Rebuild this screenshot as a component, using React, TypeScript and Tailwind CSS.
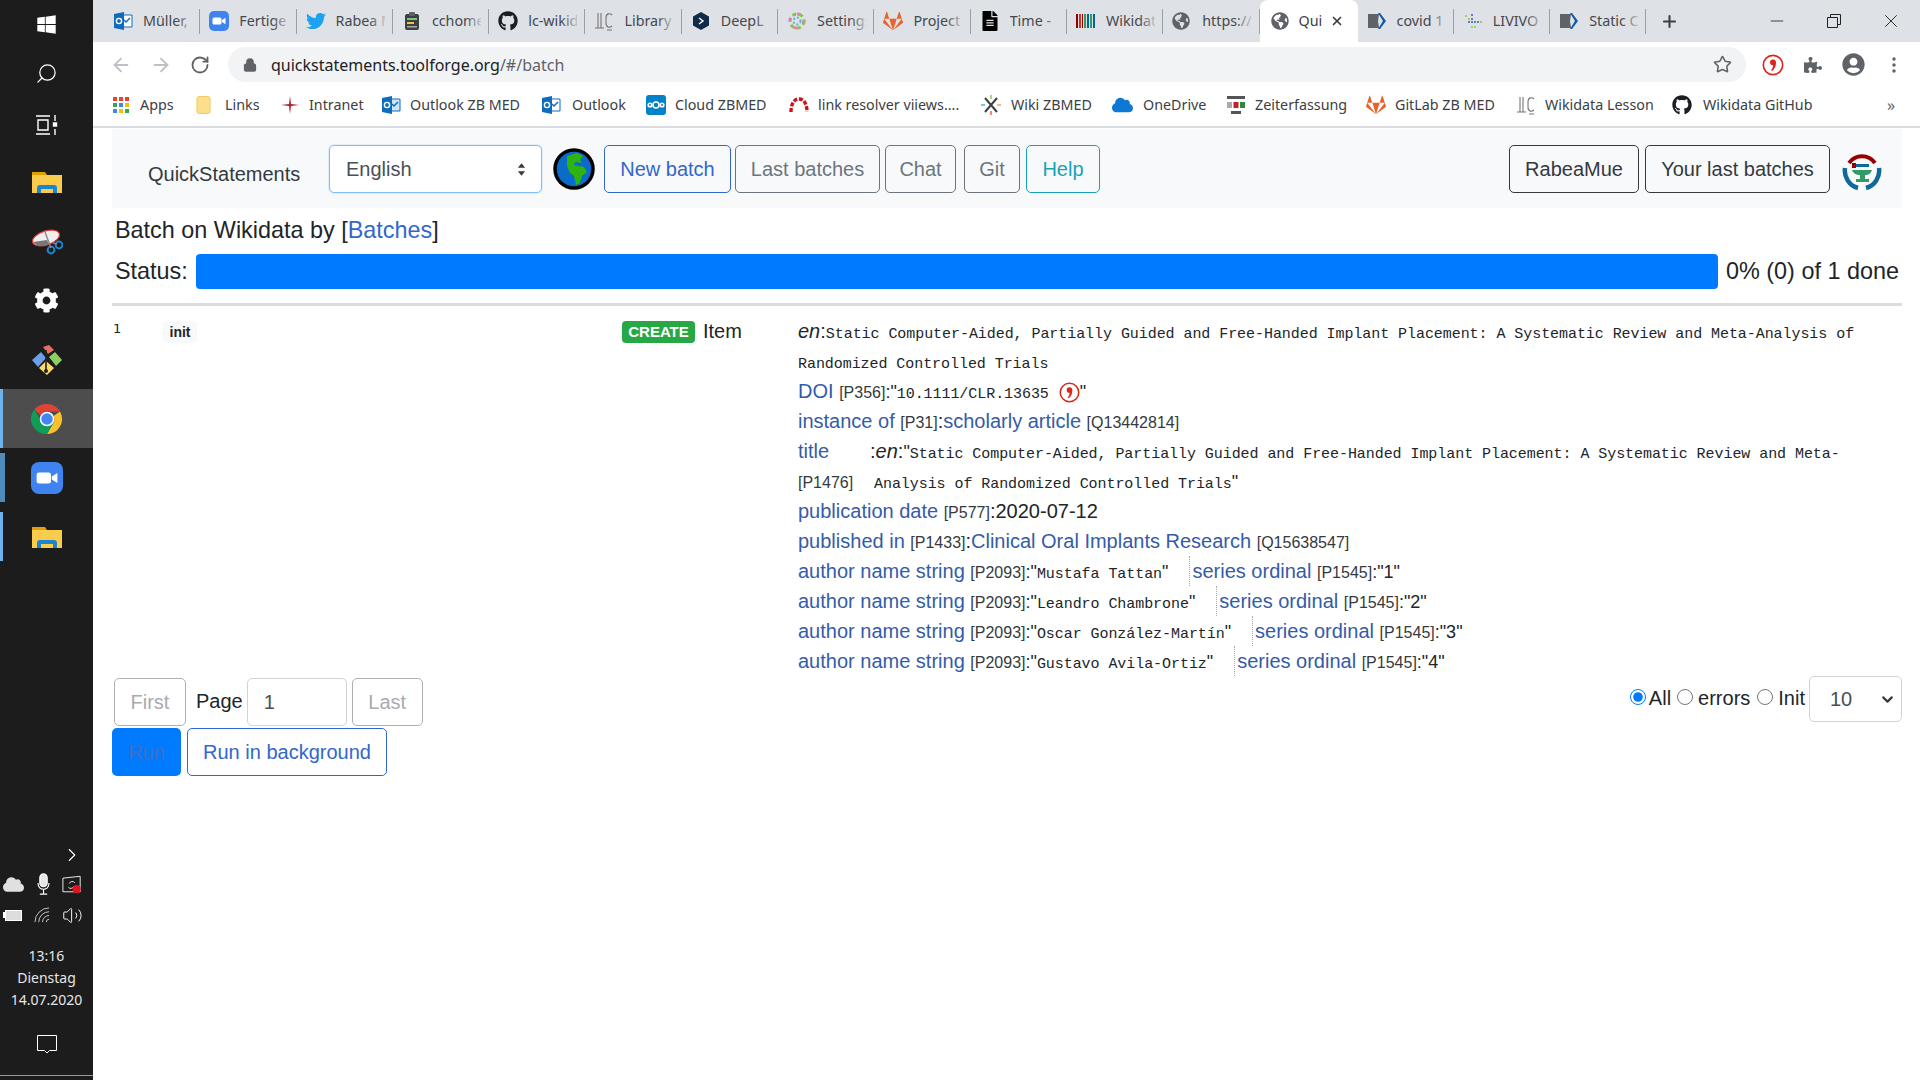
import { ArrowLeft, ArrowRight, RotateCw, Lock, Star, Plus, X, Minus, Search, ChevronRight, ChevronDown, Volume2 } from "lucide-react";
import { FaGithub, FaTwitter, FaGitlab, FaWindows, FaCog, FaPuzzlePiece, FaUserCircle, FaGlobeAmericas, FaFileAlt, FaCloud } from "react-icons/fa";

const ui = { fontFamily: '"Noto Sans", "Open Sans", sans-serif' };

function Outlook({ light = false }: { light?: boolean }) {
  return (
    <svg viewBox="0 0 20 20" className="h-5 w-5 shrink-0">
      <path d="M8 4h11v12H8z" fill={light ? "#cfe4f7" : "#fff"} stroke="#0f6cbd" strokeWidth="1" />
      <path d="M11 9l2 2 4-4" fill="none" stroke="#0f6cbd" strokeWidth="1.5" />
      <path d="M1 3l10-2v18L1 17z" fill="#0f6cbd" />
      <circle cx="6" cy="10" r="2.6" fill="none" stroke="#fff" strokeWidth="1.4" />
    </svg>
  );
}

function ZoomIcon({ size = "h-5 w-5" }: { size?: string }) {
  return (
    <svg viewBox="0 0 20 20" className={`${size} shrink-0`}>
      <rect width="20" height="20" rx="5" fill="#3f83f0" />
      <rect x="3.5" y="6.5" width="9" height="7" rx="1.5" fill="#fff" />
      <path d="M13 9l3.5-2.2v6.4L13 11z" fill="#fff" />
    </svg>
  );
}

function Clipboard() {
  return (
    <svg viewBox="0 0 20 20" className="h-5 w-5 shrink-0">
      <rect x="3" y="3" width="14" height="16" rx="2" fill="#3c4043" />
      <rect x="7" y="1" width="6" height="4" rx="1" fill="#5f6368" />
      <rect x="5" y="7" width="10" height="2" fill="#7cc47f" />
      <rect x="5" y="11" width="7" height="2" fill="#f0c040" />
      <rect x="5" y="15" width="10" height="1.5" fill="#aaa" />
    </svg>
  );
}

function LcIcon() {
  return (
    <svg viewBox="0 0 20 20" className="h-5 w-5 shrink-0" fill="none" stroke="#777" strokeWidth="1.1">
      <path d="M1 17h9M4 2v15M7 2v15M18 4c-2-2-6-2-6 3v5c0 5 4 5 6 3M13 19h5" />
    </svg>
  );
}

function DeepL() {
  return (
    <svg viewBox="0 0 20 20" className="h-5 w-5 shrink-0">
      <path d="M10 1l8 4.5v9L10 19l-8-4.5v-9z" fill="#0f2b46" />
      <path d="M8 7l4 3-4 3" fill="none" stroke="#fff" strokeWidth="1.4" />
    </svg>
  );
}

function SettingSwirl() {
  return (
    <svg viewBox="0 0 20 20" className="h-5 w-5 shrink-0" fill="none" strokeWidth="3">
      <circle cx="10" cy="10" r="7" stroke="#8bc34a" strokeDasharray="4 3" />
      <circle cx="10" cy="10" r="7" stroke="#e57fb0" strokeDasharray="3 8" />
      <circle cx="10" cy="10" r="3.5" stroke="#55b8c9" strokeDasharray="2 2" strokeWidth="2" />
    </svg>
  );
}

function WikidataBars() {
  return (
    <svg viewBox="0 0 20 20" className="h-5 w-5 shrink-0">
      <rect x="0" y="3" width="2" height="14" fill="#990000" />
      <rect x="3" y="3" width="2" height="14" fill="#c33" />
      <rect x="6" y="3" width="1" height="14" fill="#990000" />
      <rect x="8" y="3" width="2" height="14" fill="#339966" />
      <rect x="11" y="3" width="2" height="14" fill="#006699" />
      <rect x="14" y="3" width="2" height="14" fill="#339966" />
      <rect x="17" y="3" width="2" height="14" fill="#006699" />
    </svg>
  );
}

function Chevrons() {
  return (
    <svg viewBox="0 0 20 20" className="h-5 w-5 shrink-0">
      <path d="M1 3h11l-1 7 1 7H1z" fill="#5f6368" />
      <path d="M13 2l6 8-6 8h-2l5-8-5-8z" fill="#0f5aa8" />
    </svg>
  );
}

function Livivo() {
  return (
    <svg viewBox="0 0 20 20" className="h-5 w-5 shrink-0">
      <g fill="#5b7fc9">
        <rect x="8" y="3" width="2" height="2" /><rect x="8" y="7" width="2" height="2" /><rect x="11" y="10" width="2" height="2" />
        <rect x="8" y="10" width="2" height="2" /><rect x="14" y="10" width="2" height="2" /><rect x="5" y="10" width="2" height="2" />
      </g>
      <g fill="#a5cf5e">
        <rect x="2" y="4" width="2" height="2" /><rect x="5" y="7" width="2" height="2" /><rect x="11" y="15" width="2" height="2" />
        <rect x="8" y="15" width="2" height="2" /><rect x="17" y="10" width="2" height="2" />
      </g>
    </svg>
  );
}

function CommaCircle({ className }: { className: string }) {
  return (
    <svg viewBox="0 0 20 20" className={className}>
      <circle cx="10" cy="10" r="8.8" fill="#fff" stroke="#d9281e" strokeWidth="1.5" />
      <circle cx="10" cy="7.6" r="2.7" fill="#d9281e" />
      <path d="M12.6 7.500c.3 3.500-1 6-3.400 8l-1-.8c1.500-1.700 1.900-3.200 1.900-5z" fill="#d9281e" />
    </svg>
  );
}

const tabs = [
  { label: "Müller,", icon: <Outlook /> },
  { label: "Fertige", icon: <ZoomIcon /> },
  { label: "Rabea M", icon: <FaTwitter className="h-5 w-5 shrink-0 text-[#1da1f2]" /> },
  { label: "cchome", icon: <Clipboard /> },
  { label: "lc-wikid", icon: <FaGithub className="h-5 w-5 shrink-0 text-[#1b1f23]" /> },
  { label: "Library", icon: <LcIcon /> },
  { label: "DeepL", icon: <DeepL /> },
  { label: "Settings", icon: <SettingSwirl /> },
  { label: "Project", icon: <FaGitlab className="h-5 w-5 shrink-0 text-[#e8622c]" /> },
  { label: "Time -", icon: <FaFileAlt className="h-5 w-5 shrink-0 text-black" /> },
  { label: "Wikidat", icon: <WikidataBars /> },
  { label: "https://", icon: <FaGlobeAmericas className="h-[18px] w-[18px] shrink-0 text-[#5f6368]" /> },
  { label: "Qui", icon: <FaGlobeAmericas className="h-[18px] w-[18px] shrink-0 text-[#5f6368]" />, active: true },
  { label: "covid 1", icon: <Chevrons /> },
  { label: "LIVIVO", icon: <Livivo /> },
  { label: "Static C", icon: <Chevrons /> },
];

const bookmarks = [
  {
    label: "Apps", w: "w-[83px]", gap: "gap-[11px]",
    icon: (
      <svg viewBox="0 0 16 16" className="h-4 w-4 shrink-0">
        <g fill="#ea4335"><rect width="4" height="4" /><rect x="6" width="4" height="4" /><rect x="12" width="4" height="4" /></g>
        <g fill="#34a853"><rect y="6" width="4" height="4" /><rect x="6" y="6" width="4" height="4" fill="#4285f4" /><rect x="12" y="6" width="4" height="4" fill="#fbbc04" /></g>
        <g fill="#4285f4"><rect y="12" width="4" height="4" /><rect x="6" y="12" width="4" height="4" fill="#fbbc04" /><rect x="12" y="12" width="4" height="4" fill="#34a853" /></g>
      </svg>
    ),
  },
  {
    label: "Links", w: "w-[84px]", gap: "gap-[14px]",
    icon: <svg viewBox="0 0 16 20" className="h-5 w-[15px] shrink-0"><rect x="1" y="1" width="14" height="18" rx="2" fill="#fcdf8a" stroke="#f2c85a" /></svg>,
  },
  {
    label: "Intranet", w: "w-[101px]", gap: "gap-[9px]",
    icon: <svg viewBox="0 0 20 20" className="h-5 w-5 shrink-0"><path d="M10 1l1 8 8 1-8 1-1 8-1-8-8-1 8-1z" fill="#a8262c" /></svg>,
  },
  { label: "Outlook ZB MED", w: "w-[160px]", gap: "gap-[9px]", icon: <Outlook light /> },
  { label: "Outlook", w: "w-[105px]", gap: "gap-[11px]", icon: <Outlook /> },
  {
    label: "Cloud ZBMED", w: "w-[143px]", gap: "gap-[9px]",
    icon: (
      <svg viewBox="0 0 20 20" className="h-5 w-5 shrink-0">
        <rect width="20" height="20" rx="3" fill="#0082c9" />
        <g fill="none" stroke="#fff" strokeWidth="1.6"><circle cx="10" cy="10" r="3" /><circle cx="4" cy="10" r="1.8" /><circle cx="16" cy="10" r="1.8" /></g>
      </svg>
    ),
  },
  {
    label: "link resolver viiews....", w: "w-[192px]", gap: "gap-[9px]",
    icon: <svg viewBox="0 0 20 20" className="h-5 w-5 shrink-0"><path d="M2 17c0-8 3-13 8-13s8 5 8 13" fill="none" stroke="#c9151b" strokeWidth="3.4" strokeDasharray="4 1.6" /></svg>,
  },
  {
    label: "Wiki ZBMED", w: "w-[131px]", gap: "gap-[10px]",
    icon: (
      <svg viewBox="0 0 20 20" className="h-5 w-5 shrink-0">
        <path d="M4 3l12 14M16 3L4 17" stroke="#3c4043" strokeWidth="2" />
        <path d="M10 0v4" stroke="#8bc34a" strokeWidth="1.4" /><path d="M10 16v4" stroke="#e06030" strokeWidth="1.4" />
        <path d="M0 10h4" stroke="#4aa8d8" strokeWidth="1.4" /><path d="M16 10h4" stroke="#f0a030" strokeWidth="1.4" />
      </svg>
    ),
  },
  { label: "OneDrive", w: "w-[114px]", gap: "gap-[10px]", icon: <FaCloud className="h-5 w-[21px] shrink-0 text-[#0f78d4]" /> },
  {
    label: "Zeiterfassung", w: "w-[140px]", gap: "gap-[9px]",
    icon: (
      <svg viewBox="0 0 20 20" className="h-5 w-5 shrink-0">
        <rect x="1" y="1" width="18" height="3" fill="#555" />
        <rect x="1" y="7" width="5" height="6" fill="#aaa" /><rect x="7.5" y="7" width="5" height="6" fill="#c8202a" /><rect x="14" y="7" width="5" height="6" fill="#2a8a44" />
        <rect x="5" y="16" width="10" height="3" fill="#555" />
      </svg>
    ),
  },
  { label: "GitLab ZB MED", w: "w-[150px]", gap: "gap-[9px]", icon: <FaGitlab className="h-5 w-5 shrink-0 text-[#e8622c]" /> },
  { label: "Wikidata Lesson", w: "w-[156px]", gap: "gap-[9px]", icon: <LcIcon /> },
  { label: "Wikidata GitHub", w: "w-[221px]", gap: "gap-[11px]", icon: <FaGithub className="h-5 w-5 shrink-0 text-[#1b1f23]" /> },
];

function TabStrip() {
  return (
    <div className="flex h-[42px] items-stretch bg-[#dee1e6] pl-[11px]">
      {tabs.map((t) =>
        t.active ? (
          <div key={t.label} className="relative flex w-[98px] items-center rounded-t-lg bg-white pl-[11px]">
            {t.icon}
            <span className="ml-[10px] text-[14.3px] whitespace-nowrap text-[#3c4043]">{t.label}</span>
            <X className="mr-[14px] ml-auto h-[14px] w-[14px] text-[#3c4043]" strokeWidth={3} />
          </div>
        ) : (
          <div key={t.label} className="relative flex w-[96.3px] items-center pl-[9px]">
            <div className="flex w-[28px] shrink-0 items-center">{t.icon}</div>
            <span className="ml-[2px] w-[49px] overflow-hidden text-[14.3px] whitespace-nowrap text-[#45484d]">{t.label}</span>
            <div className="absolute top-0 bottom-0 left-[72px] w-[20px] bg-gradient-to-r from-transparent to-[#dee1e6]" />
            <div className="absolute top-[9px] right-0 h-[25px] w-px bg-[#9aa0a6]" />
          </div>
        ),
      )}
      <div className="flex w-[46px] items-center justify-center">
        <Plus className="h-[19px] w-[19px] text-[#3c4043]" strokeWidth={2.6} />
      </div>
      <div className="ml-auto flex items-center">
        <div className="flex w-[57px] justify-center"><Minus className="h-5 w-5 text-[#222]" strokeWidth={1} /></div>
        <div className="flex w-[57px] justify-center">
          <svg viewBox="0 0 14 14" className="h-[14px] w-[14px]" fill="none" stroke="#222"><path d="M.5 3.5h10v10H.5zM3.5 3.5v-3h10v10h-3" /></svg>
        </div>
        <div className="flex w-[58px] justify-center"><X className="h-[22px] w-[22px] text-[#222]" strokeWidth={1} /></div>
      </div>
    </div>
  );
}

function AddressBar() {
  return (
    <div className="flex h-[42px] items-center bg-white pt-[3px]">
      <div className="flex w-[135px] shrink-0 items-center pl-[17px]">
        <ArrowLeft className="h-[22px] w-[22px] text-[#bdc1c6]" strokeWidth={2} />
        <ArrowRight className="ml-[18px] h-[22px] w-[22px] text-[#bdc1c6]" strokeWidth={2} />
        <RotateCw className="ml-[18px] h-5 w-5 text-[#5f6368]" strokeWidth={2.2} />
      </div>
      <div className="flex h-[35px] w-[1518px] shrink-0 items-center rounded-full bg-[#f1f3f4] pl-[15px]">
        <Lock className="h-[14px] w-[14px] text-[#5f6368]" strokeWidth={3} fill="#5f6368" />
        <span className="ml-[14px] text-[16px] text-[#202124]">
          quickstatements.toolforge.org<span className="text-[#5f6368]">/#/batch</span>
        </span>
        <Star className="mr-[14px] ml-auto h-[19px] w-[19px] text-[#5f6368]" strokeWidth={2} />
      </div>
      <div className="flex items-center pl-[16px]">
        <CommaCircle className="h-[22px] w-[22px]" />
        <FaPuzzlePiece className="ml-[20px] h-[18px] w-[18px] text-[#5f6368]" />
        <FaUserCircle className="ml-[20px] h-[23px] w-[23px] text-[#5f6368]" />
        <svg viewBox="0 0 4 16" className="ml-[27px] h-4 w-1 fill-[#5f6368]"><circle cx="2" cy="2" r="1.7" /><circle cx="2" cy="8" r="1.7" /><circle cx="2" cy="14" r="1.7" /></svg>
      </div>
    </div>
  );
}

function BookmarksBar() {
  return (
    <div className="flex h-[44px] items-center border-b-2 border-[#dadce0] bg-white pl-[20px] text-[14.3px] text-[#3c4043]">
      {bookmarks.map((b) => (
        <div key={b.label} className={`flex shrink-0 items-center whitespace-nowrap ${b.w} ${b.gap}`}>
          {b.icon}
          <span>{b.label}</span>
        </div>
      ))}
      <span className="ml-[-6px] text-[16px] text-[#5f6368]">»</span>
    </div>
  );
}

function FolderIcon() {
  return (
    <svg viewBox="0 0 32 24" className="h-6 w-8">
      <path d="M1 2h13l2 3H1z" fill="#e0a000" />
      <path d="M1 5h30v18H1z" fill="#f9cc4e" />
      <path d="M6 23v-5c0-2 1-3 3-3h14c2 0 3 1 3 3v5h-4v-4H10v4z" fill="#1b86cf" />
    </svg>
  );
}

function Taskbar() {
  return (
    <aside className="flex w-[93px] shrink-0 flex-col bg-[#1c1c1c] text-[#e6e6e6]" style={ui}>
      <div className="flex h-[49px] items-center justify-center"><FaWindows className="h-[21px] w-[21px] text-white" /></div>
      <div className="flex h-[49px] items-center justify-center"><Search className="h-[23px] w-[23px] -scale-x-100 text-white" strokeWidth={1.3} /></div>
      <div className="flex h-[54px] items-center justify-center">
        <svg viewBox="0 0 22 20" className="h-5 w-[22px]" fill="none" stroke="#fff" strokeWidth="1.4">
          <path d="M0 1h14M0 19h14M2 5h10v10H2zM19 0v6M19 14v6" />
          <rect x="17.5" y="8" width="3" height="3" fill="#fff" />
        </svg>
      </div>
      <div className="flex h-[59px] items-center justify-center"><FolderIcon /></div>
      <div className="flex h-[60px] items-center justify-center">
        <svg viewBox="0 0 32 28" className="h-7 w-8">
          <ellipse cx="15" cy="11" rx="14" ry="7" transform="rotate(-18 15 11)" fill="#eee" stroke="#d33" strokeWidth="1.2" />
          <path d="M2 15c4 5 12 5 16 2l-2-4z" fill="#777" />
          <circle cx="20" cy="23" r="3.4" fill="none" stroke="#1b86cf" strokeWidth="2" />
          <circle cx="28" cy="18" r="3.4" fill="none" stroke="#1b86cf" strokeWidth="2" />
          <path d="M14 5l6 16M22 16l4 1" stroke="#888" strokeWidth="1.4" />
        </svg>
      </div>
      <div className="flex h-[59px] items-center justify-center"><FaCog className="h-[25px] w-[25px] text-white" /></div>
      <div className="flex h-[59px] items-center justify-center">
        <svg viewBox="0 0 32 32" className="h-8 w-8">
          <path d="M12 3l6-2 5 5-6 4z" fill="#ea6b66" />
          <path d="M1 16l9-8 5 6-8 9z" fill="#6d9eeb" />
          <path d="M18 13l6-5 7 8-6 6z" fill="#8fce63" />
          <path d="M8 24l7-7 8 7-7 7z" fill="#ffd966" />
          <path d="M15 6v22M15 14l6 4" stroke="#222" strokeWidth="1.6" />
          <circle cx="15" cy="27" r="2" fill="#222" />
        </svg>
      </div>
      <div className="relative flex h-[59px] items-center justify-center bg-[#4d4d4d]">
        <div className="absolute top-0 bottom-0 left-0 w-[3px] bg-[#6cb2eb]" />
        <svg viewBox="0 0 32 32" className="h-8 w-8">
          <path d="M16 1a15 15 0 0113 7.5H16a7.5 7.5 0 00-6.5 3.7L3.5 6.5A15 15 0 0116 1z" fill="#db4437" />
          <path d="M29 8.500a15 15 0 01-13 22.500l6.500-11.200A7.500 7.500 0 0022.500 13z" fill="#fbc02d" />
          <path d="M16 31A15 15 0 013.500 6.500l6.500 11.300a7.500 7.500 0 006.500 3.700l6-1.700z" fill="#0f9d58" />
          <circle cx="16" cy="16" r="6.500" fill="#4285f4" stroke="#fff" strokeWidth="1.500" />
        </svg>
      </div>
      <div className="relative flex h-[59px] items-center justify-center">
        <div className="absolute top-[5px] bottom-[5px] left-0 w-[5px] bg-[#4f8cbc]" />
        <ZoomIcon size="h-8 w-8" />
      </div>
      <div className="relative flex h-[59px] items-center justify-center">
        <div className="absolute top-[5px] bottom-[5px] left-0 w-[3px] bg-[#6cb2eb]" />
        <FolderIcon />
      </div>

      <div className="mt-auto flex flex-col items-center">
        <ChevronRight className="ml-[50px] h-[22px] w-[22px] text-white" strokeWidth={1.2} />
        <div className="mt-[3px] flex h-[30px] w-full items-center justify-between pr-[11px] pl-[3px]">
          <FaCloud className="h-[19px] w-[21px] text-[#e0e0e0]" />
          <svg viewBox="0 0 14 24" className="h-[22px] w-[13px]" fill="none" stroke="#fff" strokeWidth="1.3">
            <rect x="3" y="1" width="8" height="14" rx="4" fill="#e6e6e6" />
            <path d="M1 11c0 9 12 9 12 0M7 18v5M3 23h8" />
          </svg>
          <svg viewBox="0 0 22 20" className="h-[19px] w-[20px]">
            <path d="M1 3l19-2v17H1z" fill="none" stroke="#e6e6e6" strokeWidth="1.1" />
            <path d="M8 9a3.500 3.500 0 016-1M13 12a3.500 3.500 0 01-6 1" fill="none" stroke="#e6e6e6" strokeWidth="1.1" />
            <circle cx="16" cy="15" r="4.500" fill="#e81123" />
          </svg>
        </div>
        <div className="mt-px flex h-[30px] w-full items-center justify-between pr-[10px] pl-[3px]">
          <div className="flex items-center">
            <span className="h-[6px] w-[2px] bg-white" />
            <div className="h-[11px] w-[17px] border border-white bg-[#ddd]" />
          </div>
          <svg viewBox="0 0 18 18" className="h-[17px] w-[17px]" fill="none" stroke="#ccc"><path d="M1 16A15 15 0 0116 1M5 16A11 11 0 0116 5M9 16a7 7 0 017-7M13 16a3 3 0 013-3" /></svg>
          <Volume2 className="h-[21px] w-[21px] text-white" strokeWidth={1.1} />
        </div>
        <div className="mt-[15px] text-center text-[14px] leading-[22px]">
          <div>13:16</div>
          <div>Dienstag</div>
          <div>14.07.2020</div>
        </div>
        <svg viewBox="0 0 20 20" className="mt-[23px] h-5 w-5" fill="none" stroke="#fff" strokeWidth="1"><path d="M.5 1.500h19v15h-7l-2.500 2.500-2.500-2.500h-7z" /></svg>
        <div className="mt-[21px] mb-[4px] h-px w-full bg-[#999]" />
      </div>
    </aside>
  );
}

function NavBtn({ children, tone, className = "" }: { children: React.ReactNode; tone: string; className?: string }) {
  return (
    <div className={`flex h-[48px] shrink-0 items-center justify-center rounded-[5px] border text-[20px] ${tone} ${className}`}>
      {children}
    </div>
  );
}

function Navbar() {
  return (
    <div className="mt-px flex h-[79px] items-start bg-[#f8f9fa] pt-[16px] pr-[20px]">
      <span className="mt-[16px] ml-[36px] w-[181px] text-[20px] leading-[26px] text-[#343a40]">QuickStatements</span>
      <div className="flex h-[48px] w-[213px] items-center justify-between rounded-[5px] border border-[#80bdff] bg-white pr-[15px] pl-[16px] text-[20px] text-[#495057] shadow-[0_0_0_1px_rgba(128,189,255,0.2)]">
        <span className="-mt-[1px]">English</span>
        <svg viewBox="0 0 10 16" className="h-[15px] w-[9px] fill-[#343a40]"><path d="M5 1l4 5H1zM5 15l4-5H1z" /></svg>
      </div>
      <svg viewBox="0 0 42 42" className="mt-[3px] ml-[11px] h-[42px] w-[42px]">
        <circle cx="21" cy="21" r="19" fill="#0a6cc9" stroke="#000" strokeWidth="3.500" />
        <path d="M14 8l10-3 6 3-3 4 2 3-7-1-1 3 10 2 3 5-5 4-2 7-4 2-2-9-4-3-3-7z" fill="#2fb30f" />
      </svg>
      <div className="ml-[9px] flex gap-[4px]">
        <NavBtn tone="w-[127px] border-[#3366cc] text-[#3366cc]">New batch</NavBtn>
        <NavBtn tone="w-[145px] border-[#6c757d] text-[#6c757d]">Last batches</NavBtn>
        <NavBtn tone="ml-[1px] w-[71px] border-[#6c757d] text-[#6c757d]">Chat</NavBtn>
        <NavBtn tone="ml-[4px] w-[56px] border-[#6c757d] text-[#6c757d]">Git</NavBtn>
        <NavBtn tone="ml-[2px] w-[74px] border-[#17a2b8] text-[#17a2b8]">Help</NavBtn>
      </div>
      <NavBtn tone="ml-auto w-[130px] border-[#343a40] text-[#343a40]">RabeaMue</NavBtn>
      <NavBtn tone="ml-[6px] w-[185px] border-[#343a40] text-[#343a40]">Your last batches</NavBtn>
      <svg viewBox="0 0 40 40" className="mt-[6px] ml-[12px] h-10 w-10" fill="none">
        <path d="M7 12A16 16 0 0133 12" stroke="#990000" strokeWidth="4" />
        <path d="M3 17A18 18 0 0016 37M37 17A18 18 0 0124 37" stroke="#11699b" strokeWidth="4.500" />
        <path d="M10 19h20c-1 3-3 5-7 5v4h4v3H14v-3h4v-4c-4 0-7-2-8-5z" fill="#339966" />
        <path d="M13 13h14v3H13z" fill="#11699b" />
        <path d="M10 12h4v5h-4z" fill="#990000" />
      </svg>
    </div>
  );
}

const Link = ({ children }: { children: React.ReactNode }) => <span className="text-[20px] leading-none text-[#345ca8]">{children}</span>;
const Pid = ({ children }: { children: React.ReactNode }) => <span className="text-[16px] leading-none text-[#343a40]">{children}</span>;
const Mono = ({ children }: { children: React.ReactNode }) => (
  <span className="text-[15px] leading-none tracking-[-0.06px] text-[#212529]" style={{ fontFamily: '"Liberation Mono", monospace' }}>{children}</span>
);
const Quote = ({ children }: { children: React.ReactNode }) => <span className="text-[18px] leading-none text-[#212529]">{children}</span>;

function AuthorRow({ name, n }: { name: string; n: string }) {
  return (
    <div className="flex h-[30px] items-baseline">
      <Link>author name string</Link>&nbsp;<Pid>[P2093]</Pid><Quote>:"</Quote><Mono>{name}</Mono><Quote>"</Quote>
      <div className="ml-[21px] flex h-[30px] items-baseline border-l border-dotted border-[#aaa] pl-[2px]">
        <Link>series ordinal</Link>&nbsp;<Pid>[P1545]</Pid><Quote>:"{n}"</Quote>
      </div>
    </div>
  );
}

function Statements() {
  return (
    <div className="-mt-[2px] pb-[2px] text-[20px] leading-[30px]">
      <div>
        <i className="leading-none text-[#212529]">en</i><span className="leading-none">:</span>
        <Mono>Static Computer-Aided, Partially Guided and Free-Handed Implant Placement: A Systematic Review and Meta-Analysis of Randomized Controlled Trials</Mono>
      </div>
      <div className="flex h-[30px] items-baseline">
        <Link>DOI</Link>&nbsp;<Pid>[P356]</Pid><Quote>:"</Quote><Mono>10.1111/CLR.13635</Mono>
        <CommaCircle className="ml-[10px] h-[21px] w-[21px] translate-y-[5px]" /><Quote>"</Quote>
      </div>
      <div className="flex h-[30px] items-baseline">
        <Link>instance of</Link>&nbsp;<Pid>[P31]</Pid><span className="leading-none">:</span><Link>scholarly article</Link>&nbsp;<Pid>[Q13442814]</Pid>
      </div>
      <div className="flex">
        <div className="w-[72px] shrink-0">
          <div><Link>title</Link></div>
          <div><Pid>[P1476]</Pid></div>
        </div>
        <div className="flex-1 pl-[4px] -indent-[4px]">
          <span className="leading-none">:</span><i className="leading-none">en</i><span className="leading-none">:</span><Quote>"</Quote>
          <Mono>Static Computer-Aided, Partially Guided and Free-Handed Implant Placement: A Systematic Review and Meta-Analysis of Randomized Controlled Trials</Mono>
          <Quote>"</Quote>
        </div>
      </div>
      <div className="flex h-[30px] items-baseline">
        <Link>publication date</Link>&nbsp;<Pid>[P577]</Pid><span className="leading-none">:2020-07-12</span>
      </div>
      <div className="flex h-[30px] items-baseline">
        <Link>published in</Link>&nbsp;<Pid>[P1433]</Pid><span className="leading-none">:</span><Link>Clinical Oral Implants Research</Link>&nbsp;<Pid>[Q15638547]</Pid>
      </div>
      <AuthorRow name="Mustafa Tattan" n="1" />
      <AuthorRow name="Leandro Chambrone" n="2" />
      <AuthorRow name="Oscar González-Martín" n="3" />
      <AuthorRow name="Gustavo Avila-Ortiz" n="4" />
    </div>
  );
}

function Page() {
  return (
    <div className="pr-[18px] pl-[19px] text-[#212529]" style={{ fontFamily: '"Liberation Sans", Arial, sans-serif' }}>
      <Navbar />
      <div className="mt-[7px] ml-[3px] h-[30px] text-[23.4px] leading-[30px]">
        Batch on Wikidata by [<span className="text-[#3366cc]">Batches</span>]
      </div>
      <div className="mt-[9px] ml-[3px] flex h-[35px] items-center text-[23.4px]">
        <span className="w-[81px] shrink-0">Status:</span>
        <div className="h-full w-[1522px] rounded-[4px] bg-[#007bff]" />
        <span className="ml-[8px] whitespace-nowrap">0% (0) of 1 done</span>
      </div>
      <div className="mt-[14px] h-[3px] bg-[#dcdcdc]" />
      <div className="mt-[12px] grid grid-cols-[50px_459px_176px_1fr] pl-px">
        <div className="pt-[2px] text-[13px] leading-[18px]" style={{ fontFamily: '"DejaVu Sans", sans-serif' }}>1</div>
        <div>
          <span className="mt-[3px] inline-flex h-[22px] w-[34px] items-center justify-center rounded-[4px] bg-[#f8f9fa] text-[14px] font-bold">init</span>
        </div>
        <div className="flex items-start">
          <span className="mt-[3px] flex h-[22px] w-[73px] items-center justify-center rounded-[4px] bg-[#28a745] text-[15px] font-bold text-white">CREATE</span>
          <span className="ml-[8px] text-[20px] leading-[26px]">Item</span>
        </div>
        <Statements />
      </div>
      <div className="flex items-start justify-between">
        <div>
          <div className="ml-[2px] flex h-[48px] items-center text-[20px]">
            <div className="flex h-full w-[72px] items-center justify-center rounded-[5px] border border-[#adb0b4] text-[#a7abaf]">First</div>
            <span className="ml-[10px] -mt-[3px]">Page</span>
            <div className="ml-[4px] flex h-full w-[100px] items-center rounded-[5px] border border-[#ced4da] pl-[16px] text-[#495057]">1</div>
            <div className="ml-[5px] flex h-full w-[71px] items-center justify-center rounded-[5px] border border-[#adb0b4] text-[#a7abaf]">Last</div>
          </div>
          <div className="mt-[2px] flex h-[48px] gap-[6px] text-[20px]">
            <div className="flex w-[69px] items-center justify-center rounded-[5px] bg-[#007bff] text-[#3f6fc5]">Run</div>
            <div className="flex w-[200px] items-center justify-center rounded-[5px] border border-[#3366cc] text-[#3366cc]">Run in background</div>
          </div>
        </div>
        <div className="-mt-[2px] flex h-[46px] items-center text-[20px]">
          <input type="radio" name="filter" defaultChecked className="-mt-[4px] h-4 w-4 accent-[#007bff]" />
          <span className="-mt-[2px] ml-[3px]">All</span>
          <input type="radio" name="filter" className="-mt-[4px] ml-[6px] h-4 w-4" />
          <span className="-mt-[2px] ml-[5px]">errors</span>
          <input type="radio" name="filter" className="-mt-[4px] ml-[7px] h-4 w-4" />
          <span className="-mt-[2px] ml-[5px]">Init</span>
          <div className="ml-[4px] flex h-full w-[93px] items-center justify-between rounded-[5px] border border-[#ced4da] pr-[5px] pl-[20px] text-[#495057]">
            10
            <ChevronDown className="h-[17px] w-[17px] text-[#343a40]" strokeWidth={3} />
          </div>
        </div>
      </div>
    </div>
  );
}

export default function App() {
  return (
    <div className="flex h-[1080px] w-[1920px] overflow-hidden bg-white">
      <Taskbar />
      <main className="flex min-w-0 flex-1 flex-col">
        <div style={ui}>
          <TabStrip />
          <AddressBar />
          <BookmarksBar />
        </div>
        <Page />
      </main>
    </div>
  );
}
